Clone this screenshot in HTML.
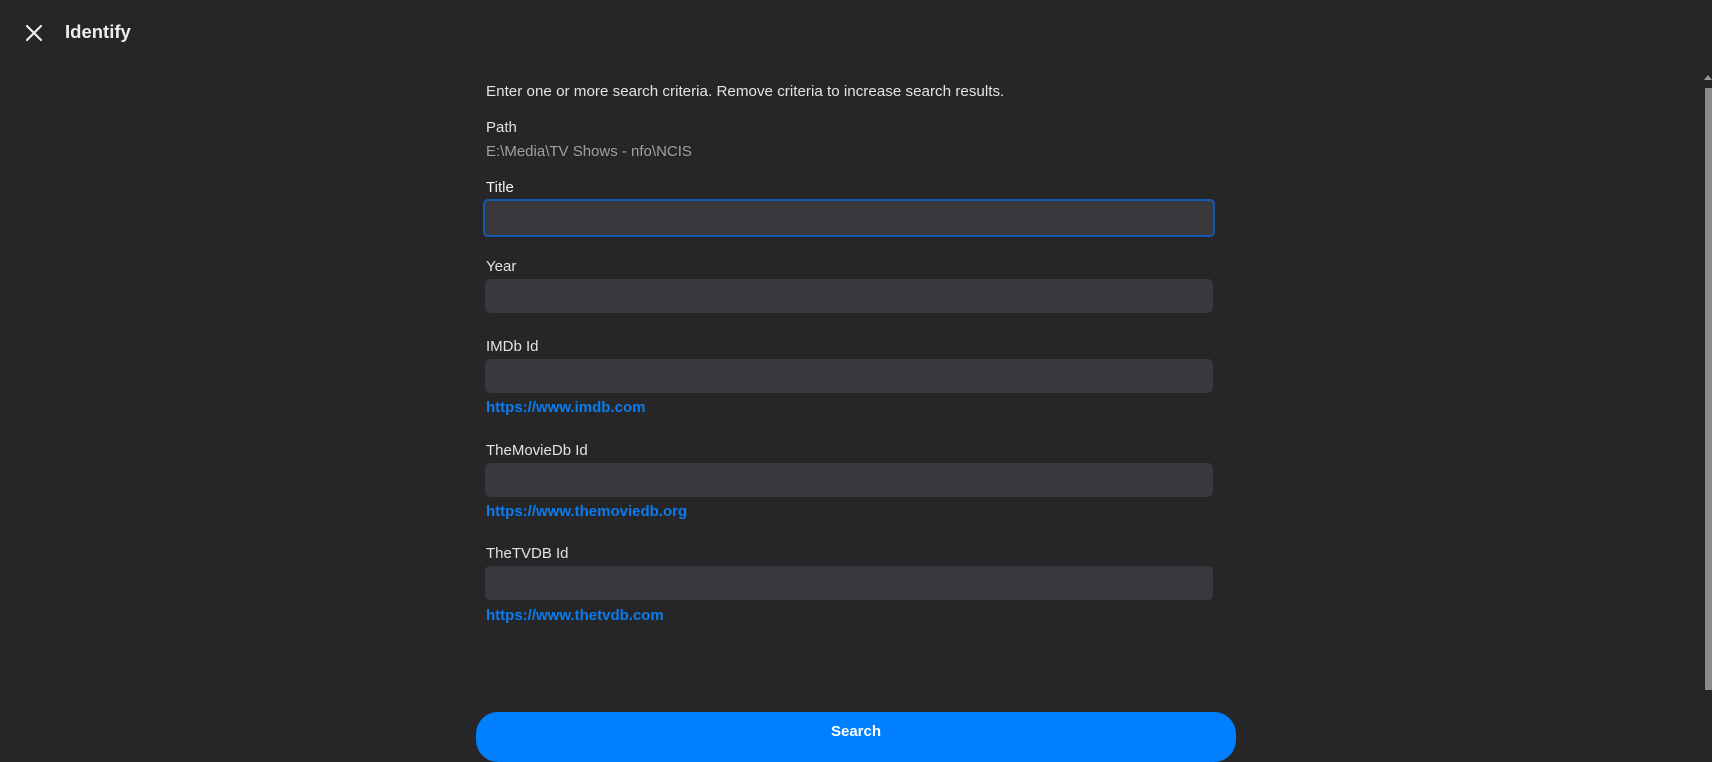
<!DOCTYPE html>
<html><head><style>
html,body{margin:0;padding:0;width:1712px;height:730px;overflow:hidden;background:#262628;font-family:"Liberation Sans",sans-serif;color:#e6e6e6}
.a{position:absolute}
.lbl{position:absolute;left:486px;font-size:15px;color:#e3e3e3}
.in{position:absolute;left:485px;width:728px;height:34px;background:#38383d;border-radius:5px}
.lnk{position:absolute;left:486px;font-size:15px;font-weight:bold;color:#0a7cf0}
</style></head><body>
<svg class="a" style="left:25px;top:24px" width="18" height="18" viewBox="0 0 18 18"><path d="M2 2L16 16M16 2L2 16" stroke="#eee" stroke-width="2.2" stroke-linecap="round"/></svg>
<div class="a" style="left:65px;top:21px;font-size:18.5px;font-weight:bold;color:#ededed">Identify</div>
<div class="lbl" style="top:83px;font-size:15.2px">Enter one or more search criteria. Remove criteria to increase search results.</div>
<div class="lbl" style="top:119px">Path</div>
<div class="lbl" style="top:143px;color:#a0a0a3">E:\Media\TV Shows - nfo\NCIS</div>
<div class="lbl" style="top:179px;color:#f2f2f2">Title</div>
<div class="in" style="top:199px;height:34px;border:2px solid #1559b0;left:483px;width:728px;box-sizing:content-box"></div>
<div class="lbl" style="top:258px">Year</div>
<div class="in" style="top:279px"></div>
<div class="lbl" style="top:338px">IMDb Id</div>
<div class="in" style="top:359px"></div>
<div class="lnk" style="top:399px">https://www.imdb.com</div>
<div class="lbl" style="top:442px">TheMovieDb Id</div>
<div class="in" style="top:463px"></div>
<div class="lnk" style="top:503px">https://www.themoviedb.org</div>
<div class="lbl" style="top:545px">TheTVDB Id</div>
<div class="in" style="top:566px"></div>
<div class="lnk" style="top:607px">https://www.thetvdb.com</div>
<div class="a" style="left:476px;top:712px;width:760px;height:50px;background:#0080ff;border-radius:22px;text-align:center;color:#fff;font-weight:bold;font-size:15px;line-height:40px">Search</div>
<div class="a" style="left:1705px;top:88px;width:7px;height:602px;background:#8a8a8d"></div>
<svg class="a" style="left:1704px;top:73px" width="8" height="8" viewBox="0 0 8 8"><path d="M0 7L4 2L8 7Z" fill="#9a9a9a"/></svg>
</body></html>
